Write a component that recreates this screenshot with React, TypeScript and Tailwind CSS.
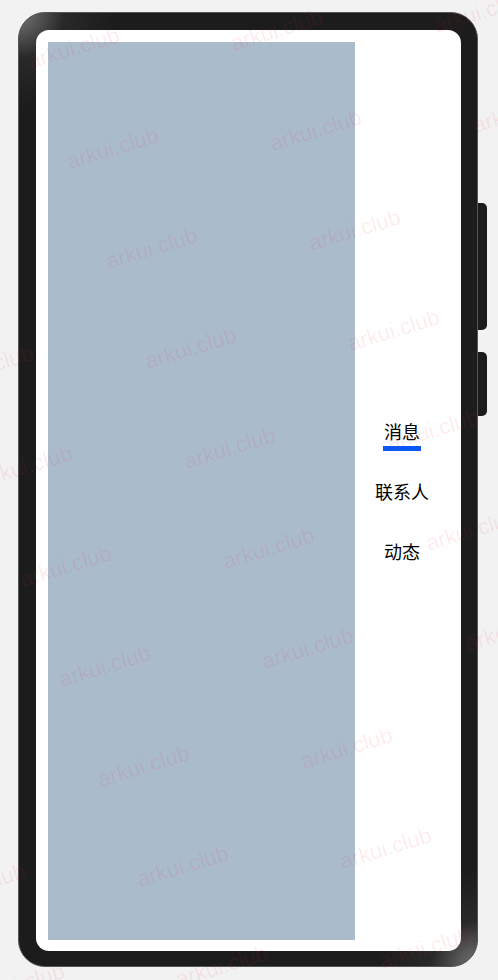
import React from 'react';

const tabs = ['消息', '联系人', '动态'];

// watermark grid: start point, row step, column step
const marks: { x: number; y: number }[] = [];
for (let i = -3; i <= 3; i++) {
  for (let j = -6; j <= 7; j++) {
    const x = 148 + i * 203 + j * 39;
    const y = 370 - i * 18 + j * 100;
    if (x > -110 && x < 498 && y > -10 && y < 1010) marks.push({ x, y });
  }
}

function Watermarks() {
  return (
    <div className="pointer-events-none absolute inset-0 overflow-hidden">
      {marks.map((m) => (
        <span
          key={`${m.x}-${m.y}`}
          className="absolute whitespace-nowrap text-[22px] leading-none text-[rgba(240,30,50,0.09)] -rotate-[17deg] origin-[0_85%]"
          style={{ left: m.x, top: m.y - 19, fontFamily: '"Liberation Sans", Arial, sans-serif' }}
        >
          arkui.club
        </span>
      ))}
    </div>
  );
}

export default function App() {
  const active = 0;

  return (
    <div className="relative h-[980px] w-[498px] overflow-hidden bg-[#f2f2f2]">
      <div className="flex items-start pl-[18px] pt-[12px]">
        {/* Phone body */}
        <div className="h-[955px] w-[460px] rounded-[27px] border border-[#555] bg-[#1c1c1c] bg-[radial-gradient(circle_at_top_left,rgba(150,150,150,0.75)_0px,rgba(60,60,60,0.4)_45px,transparent_95px),radial-gradient(circle_at_bottom_right,rgba(150,150,150,0.75)_0px,rgba(60,60,60,0.4)_45px,transparent_95px)] pl-[17px] pt-[17px]">
          {/* Screen */}
          <div className="flex h-[921px] w-[425px] rounded-[13px] bg-white p-[12px] pb-[11px]">
            <div className="h-full w-[307px] bg-[#aabbcc]" />
            <div className="flex flex-1 flex-col items-center justify-center">
              {tabs.map((t, i) => (
                <div key={t} className="flex h-[60px] w-full items-center justify-center">
                  <span
                    className="relative text-[18px] leading-[18px] text-black"
                    style={{ fontFamily: '"Noto Sans CJK SC", sans-serif' }}
                  >
                    {t}
                    {i === active && (
                      <span className="absolute left-1/2 top-full mt-[6px] h-[5px] w-[38px] -translate-x-1/2 bg-[#0a59f7]" />
                    )}
                  </span>
                </div>
              ))}
            </div>
          </div>
        </div>
        {/* Side keys */}
        <div className="flex flex-col pt-[191px]">
          <div className="h-[127px] w-[9px] rounded-r-[5px] bg-[#1c1c1c]" />
          <div className="mt-[22px] h-[64px] w-[9px] rounded-r-[5px] bg-[#1c1c1c]" />
        </div>
      </div>
      <Watermarks />
    </div>
  );
}
